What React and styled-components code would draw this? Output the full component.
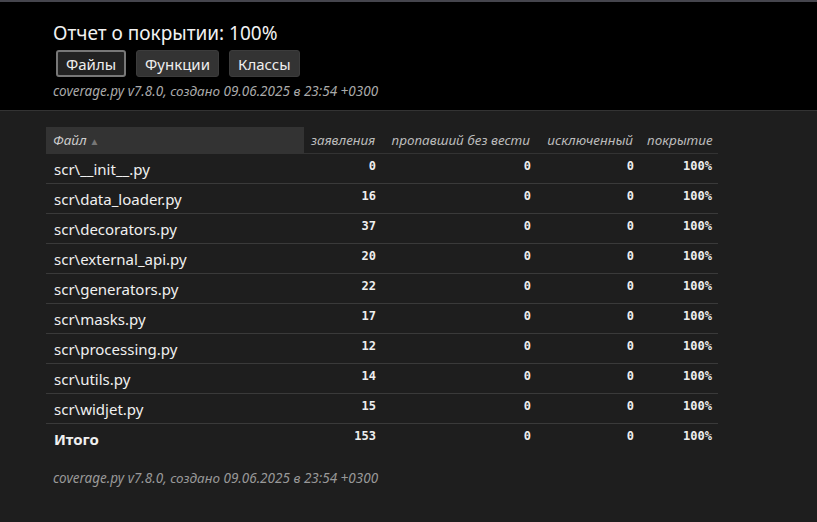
import styled, { createGlobalStyle } from 'styled-components';

const GlobalStyle = createGlobalStyle`
  html, body {
    margin: 0;
    padding: 0;
    background: #1e1e1e;
    color: #eee;
    font-family: 'Noto Sans', 'Open Sans', sans-serif;
  }
`;

const Page = styled.div`
  min-height: 522px;
  border-top: 2px solid #45454d;
  box-sizing: border-box;
`;

const Header = styled.header`
  background: #000;
  border-bottom: 1px solid #333;
  padding: 18px 0 9px 53px;
`;

const Title = styled.h1`
  margin: 0;
  font-size: 19px;
  font-weight: 400;
  line-height: 26px;
  color: #f2f2f2;
`;

const Tabs = styled.nav`
  display: flex;
  gap: 10px;
  margin: 4px 0 0 3px;
`;

const Tab = styled.button`
  height: 27px;
  padding: 0 8px;
  box-sizing: border-box;
  font-family: inherit;
  font-size: 15px;
  color: #eee;
  border-radius: 3px;
  background: ${p => (p.$active ? '#222' : '#333')};
  border: ${p => (p.$active ? '2px solid #777' : '1px solid #3c3c3c')};
  cursor: pointer;
`;

const Meta = styled.p`
  margin: 5px 0 0;
  font-size: 13.5px;
  font-style: italic;
  color: #aaa;
  line-height: 19px;
`;

const Main = styled.main`
  padding: 16px 0 0 46px;
`;

const Table = styled.table`
  border-collapse: collapse;
  width: 672px;
  table-layout: fixed;
`;

const Th = styled.th`
  height: 26px;
  padding: 0 7px;
  font-size: 13.5px;
  font-style: italic;
  font-weight: 400;
  color: ${p => (p.$sorted ? '#ccc' : '#bbb')};
  background: ${p => (p.$sorted ? '#333' : 'transparent')};
  text-align: ${p => (p.$left ? 'left' : 'right')};
  border-bottom: 1px solid #333;
  white-space: nowrap;
`;

const Arrow = styled.span`
  font-style: normal;
  font-size: 10px;
  color: #777;
  margin-left: 3px;
`;

const Row = styled.tr`
  border-bottom: ${p => (p.$total ? 'none' : '1px solid #3a3a3a')};
`;

const Name = styled.td`
  height: 29px;
  padding: 0 8px;
  font-size: 15px;
  font-weight: ${p => (p.$bold ? 700 : 400)};
  color: #f0f0f0;
  white-space: nowrap;
`;

const Num = styled.td`
  padding: 0 6px 5px;
  text-align: right;
  font-family: 'DejaVu Sans Mono', 'Liberation Mono', monospace;
  font-size: 12px;
  font-weight: 700;
  color: #eee;
`;

const Footer = styled.footer`
  padding: 16px 0 0 53px;
  font-size: 13.5px;
  font-style: italic;
  color: #999;
`;

const files = [
  ['scr\\__init__.py', 0],
  ['scr\\data_loader.py', 16],
  ['scr\\decorators.py', 37],
  ['scr\\external_api.py', 20],
  ['scr\\generators.py', 22],
  ['scr\\masks.py', 17],
  ['scr\\processing.py', 12],
  ['scr\\utils.py', 14],
  ['scr\\widjet.py', 15],
];

const meta = 'coverage.py v7.8.0, создано 09.06.2025 в 23:54 +0300';

export default function App() {
  return (
    <Page>
      <GlobalStyle />
      <Header>
        <Title>Отчет о покрытии: 100%</Title>
        <Tabs>
          <Tab $active>Файлы</Tab>
          <Tab>Функции</Tab>
          <Tab>Классы</Tab>
        </Tabs>
        <Meta>{meta}</Meta>
      </Header>
      <Main>
        <Table>
          <colgroup>
            <col style={{ width: 258 }} />
            <col style={{ width: 78 }} />
            <col style={{ width: 155 }} />
            <col style={{ width: 103 }} />
            <col style={{ width: 78 }} />
          </colgroup>
          <thead>
            <tr>
              <Th $left $sorted>Файл<Arrow>▲</Arrow></Th>
              <Th>заявления</Th>
              <Th>пропавший без вести</Th>
              <Th>исключенный</Th>
              <Th>покрытие</Th>
            </tr>
          </thead>
          <tbody>
            {files.map(([name, n]) => (
              <Row key={name}>
                <Name>{name}</Name>
                <Num>{n}</Num>
                <Num>0</Num>
                <Num>0</Num>
                <Num>100%</Num>
              </Row>
            ))}
            <Row $total>
              <Name $bold>Итого</Name>
              <Num>153</Num>
              <Num>0</Num>
              <Num>0</Num>
              <Num>100%</Num>
            </Row>
          </tbody>
        </Table>
      </Main>
      <Footer>{meta}</Footer>
    </Page>
  );
}
